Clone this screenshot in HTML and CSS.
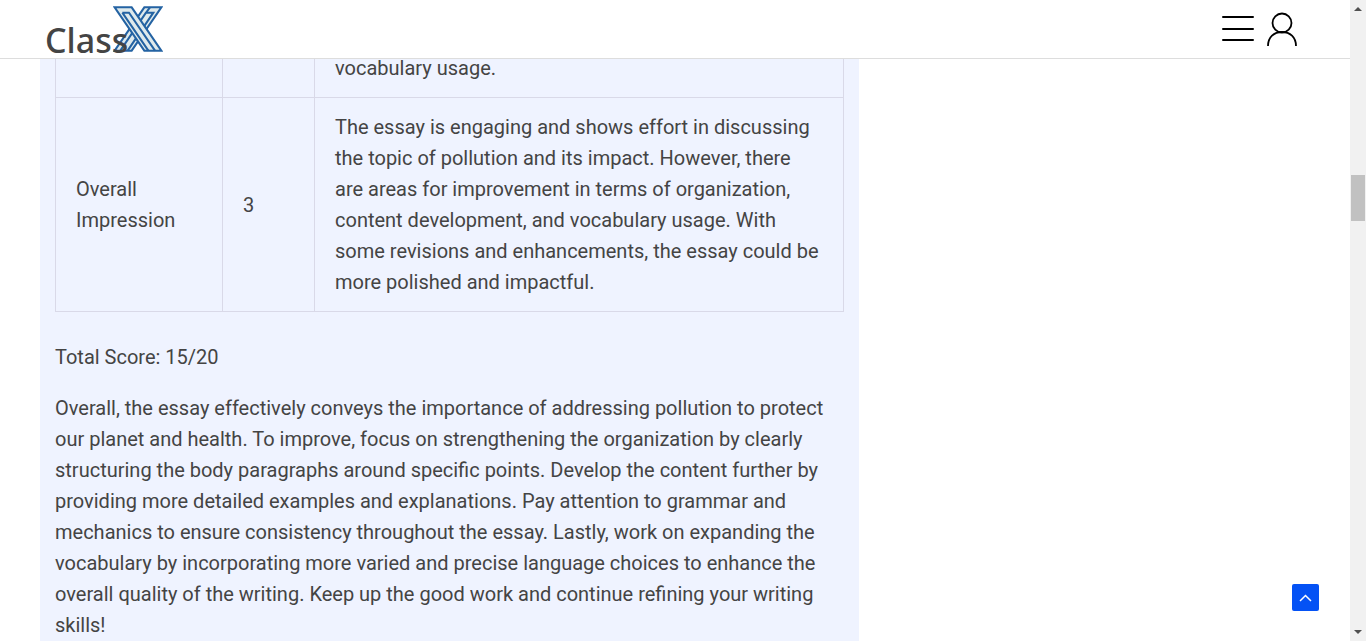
FILE: index.html
```html
<!DOCTYPE html>
<html lang="en">
<head>
  <meta charset="UTF-8" />
  <meta name="viewport" content="width=device-width, initial-scale=1.0"/>
  <title>ClassX</title>
  <link rel="stylesheet" href="styles.css">
</head>
<body>

  <div class="page">
    <header class="header">
      <a class="logo" href="#" aria-label="ClassX">
        <span class="logo-text">Class</span>
        <svg class="logo-x" viewBox="0 0 150 138" aria-hidden="true">
          <g fill="#dfeaec" stroke="#2463a3" stroke-width="6">
            <path d="M94 4H145L56 134H5Z"/>
            <path d="M111 4L99 20H121L44 134M99 20L22 134" fill="none"/>
            <path d="M5 4H56L145 134H94Z"/>
            <path d="M28 20H48L126 134M28 20L106 134" fill="none"/>
          </g>
        </svg>
      </a>
      <nav class="actions">
        <button class="icon-btn" aria-label="Menu">
          <svg width="32" height="26" viewBox="0 0 32 26" stroke="#000" stroke-width="2" stroke-linecap="round">
            <path d="M1 1H31M1 13H31M1 24H31"/>
          </svg>
        </button>
        <button class="icon-btn" aria-label="Account">
          <svg width="30" height="34" viewBox="0 0 30 34" fill="none" stroke="#000" stroke-width="1.800">
            <circle cx="15" cy="11" r="9.500"/>
            <path d="M1 34C1 25 7 20 15 20S29 25 29 34"/>
          </svg>
        </button>
      </nav>
    </header>

    <main class="content">
      <article class="card">
        <table class="scores">
          <tbody>
            <tr>
              <td class="criteria"></td>
              <td class="score"></td>
              <td>vocabulary usage.</td>
            </tr>
            <tr>
              <td class="criteria">Overall Impression</td>
              <td class="score">3</td>
              <td>The essay is engaging and shows effort in discussing the topic of pollution and its impact. However, there are areas for improvement in terms of organization, content development, and vocabulary usage. With some revisions and enhancements, the essay could be more polished and impactful.</td>
            </tr>
          </tbody>
        </table>
        <p>Total Score: 15/20</p>
        <p>Overall, the essay effectively conveys the importance of addressing pollution to protect our planet and health. To improve, focus on strengthening the organization by clearly structuring the body paragraphs around specific points. Develop the content further by providing more detailed examples and explanations. Pay attention to grammar and mechanics to ensure consistency throughout the essay. Lastly, work on expanding the vocabulary by incorporating more varied and precise language choices to enhance the overall quality of the writing. Keep up the good work and continue refining your writing skills!</p>
      </article>
    </main>

    <a class="to-top" href="#" aria-label="Back to top">
      <svg width="13" height="8" viewBox="0 0 13 8" fill="none" stroke="#fff" stroke-width="1.500">
        <path d="M1 7L6.500 1.500L12 7"/>
      </svg>
    </a>
  </div>

  <div class="scrollbar" aria-hidden="true">
    <svg width="8" height="4" viewBox="0 0 8 4"><path d="M0 4L4 0L8 4Z" fill="#505050"/></svg>
    <div class="track"><div class="thumb"></div></div>
    <svg width="8" height="4" viewBox="0 0 8 4"><path d="M0 0L4 4L8 0Z" fill="#505050"/></svg>
  </div>

</body>
</html>
```
FILE: styles.css
```css
* {
  box-sizing: border-box;
}
body {
  margin: 0;
  display: flex;
  height: 100vh;
  overflow: hidden;
  background: #fff;
  color: #444;
  font-family: Roboto, "Liberation Sans", sans-serif;
  font-size: 20px;
  line-height: 31px;
}
.page {
  position: relative;
  flex: 1;
  min-width: 0;
  overflow: hidden;
}
.header {
  position: absolute;
  top: 0;
  left: 0;
  right: 0;
  z-index: 2;
  display: flex;
  justify-content: space-between;
  align-items: center;
  height: 59px;
  padding: 0 53px 0 45px;
  background: #fff;
  border-bottom: 1px solid #ddd;
}
.logo {
  display: flex;
  align-items: flex-end;
  color: #444;
  text-decoration: none;
}
.logo-text {
  z-index: 1;
  font-family: "Noto Sans", "Open Sans", sans-serif;
  font-size: 34px;
  font-weight: 500;
  line-height: 24px;
}
.logo-x {
  width: 50px;
  height: 46px;
  margin-left: -15px;
}
.actions {
  display: flex;
  align-items: center;
  gap: 13px;
}
.icon-btn {
  display: flex;
  padding: 0;
  border: none;
  background: none;
  cursor: pointer;
}
.content {
  padding: 0 40px;
}
.card {
  max-width: 819px;
  padding: 38px 15px 15px;
  background: #eff3ff;
}
.scores {
  width: 100%;
  margin-bottom: 30px;
  border-collapse: collapse;
}
.scores td {
  padding: 14px 20px 13px;
  border: 1px solid #d9d9e8;
  vertical-align: middle;
}
.scores .criteria {
  width: 167px;
}
.scores .score {
  width: 92px;
}
.card p {
  margin: 0 0 20px;
}
.to-top {
  position: absolute;
  right: 31px;
  bottom: 30px;
  display: flex;
  align-items: center;
  justify-content: center;
  width: 27px;
  height: 27px;
  border-radius: 2px;
  background: #0452f5;
}
.scrollbar {
  display: flex;
  flex-direction: column;
  align-items: center;
  width: 16px;
  padding: 7px 0;
  background: #f1f1f1;
}
.track {
  flex: 1;
  width: 100%;
  padding: 164px 1px 0;
}
.thumb {
  height: 46px;
  background: #c1c1c1;
}
```
